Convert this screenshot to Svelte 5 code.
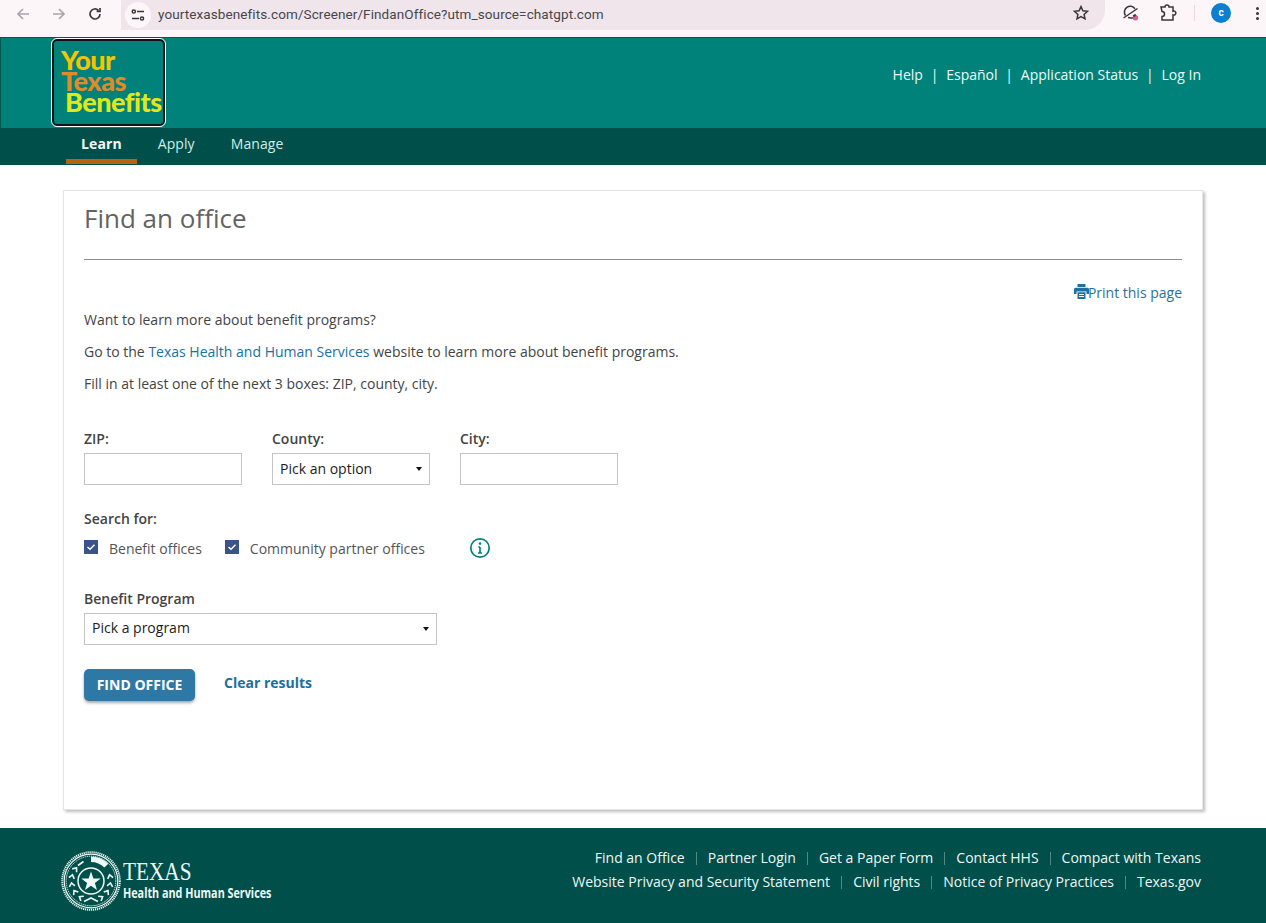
<script>
	const topLinks = ['Help', 'Español', 'Application Status', 'Log In'];
	const navItems = ['Learn', 'Apply', 'Manage'];
	const footerRows = [
		['Find an Office', 'Partner Login', 'Get a Paper Form', 'Contact HHS', 'Compact with Texans'],
		['Website Privacy and Security Statement', 'Civil rights', 'Notice of Privacy Practices', 'Texas.gov']
	];
	// laurel chevrons round the seal, degrees up from the bottom
	const leftLeaves = [32, 56, 80, 104, 128];
	const rightLeaves = [32, 56, 80, 104];
</script>

<div class="chrome">
	<div class="nav-btns">
		<svg width="16" height="16" viewBox="0 0 16 16" class="faded"><path d="M14 8H3M8 3L3 8l5 5" /></svg>
		<svg width="16" height="16" viewBox="0 0 16 16" class="faded"><path d="M2 8h11M8 3l5 5-5 5" /></svg>
		<svg width="16" height="16" viewBox="0 0 16 16"><path d="M13 8a5 5 0 1 1-1.600-3.700M13 2v3.400H9.600" /></svg>
	</div>
	<div class="omnibox">
		<span class="tune">
			<svg width="16" height="16" viewBox="0 0 16 16"><path d="M7 4.500h7M2 11.500h7" /><circle cx="3.800" cy="4.500" r="1.600" /><circle cx="12" cy="11.500" r="1.600" /></svg>
		</span>
		<span class="url">yourtexasbenefits.com/Screener/FindanOffice?utm_source=chatgpt.com</span>
		<svg class="star" width="18" height="18" viewBox="0 0 18 18"><path d="M9 2.600l1.900 4.200 4.600.5-3.400 3.100.9 4.500L9 12.600l-4 2.300.9-4.500-3.400-3.100 4.600-.5z" /></svg>
	</div>
	<div class="tools">
		<span class="labs">
			<svg width="18" height="18" viewBox="0 0 18 18"><path d="M3.500 11.500a5.800 5.800 0 0 1 9.500-6.800M1.500 14L15.500 4.500M6 13.500c2 .6 3.500.5 5 .2" /><circle cx="13.500" cy="13.800" r="2.700" class="dot" /><path d="M11.200 12.300l2.600-1.700" class="dot-top" /></svg>
		</span>
		<svg width="20" height="20" viewBox="0 0 20 20"><path d="M3 4h4a2 2 0 1 1 4 0h4v4.300a2 2 0 1 1 0 3.600V17H4v-3.500a2.500 2.500 0 0 0 0-5z" /></svg>
		<span class="sep"></span>
		<span class="avatar">c</span>
		<span class="menu"><i></i><i></i><i></i></span>
	</div>
</div>

<header class="site-head">
	<div class="brand">
		<a class="logo" href="#top">
			<span class="l1">Your</span>
			<span class="l2">Texas</span>
			<span class="l3">Benefits</span>
		</a>
	</div>
	<nav class="top-links">
		{#each topLinks as link, i}
			{#if i > 0}<span class="pipe">|</span>{/if}
			<a href="#top">{link}</a>
		{/each}
	</nav>
</header>

<nav class="main-nav">
	{#each navItems as item, i}
		<a href="#top" class:active={i === 0}>{item}</a>
	{/each}
</nav>

<main class="page">
	<section class="card">
		<h1>Find an office</h1>
		<hr />
		<div class="print-row">
			<a href="#top" class="print">
				<svg width="15" height="15" viewBox="0 0 15 15"><path d="M3.500 0h8v3h-8zM1.500 3.800h12A1.500 1.500 0 0 1 15 5.300V10h-2.500V7.500h-10V10H0V5.300a1.500 1.500 0 0 1 1.500-1.500z" /><path d="M3.500 8.300h8V15h-8zM5 10v1h5v-1zM5 12v1h5v-1z" fill-rule="evenodd" /></svg>Print this page
			</a>
		</div>
		<p>Want to learn more about benefit programs?</p>
		<p>Go to the <a href="#top">Texas Health and Human Services</a> website to learn more about benefit programs.</p>
		<p>Fill in at least one of the next 3 boxes: ZIP, county, city.</p>

		<div class="fields">
			<div class="field">
				<span class="label">ZIP:</span>
				<div class="box"></div>
			</div>
			<div class="field">
				<span class="label">County:</span>
				<div class="box select">Pick an option<i class="caret"></i></div>
			</div>
			<div class="field">
				<span class="label">City:</span>
				<div class="box"></div>
			</div>
		</div>

		<span class="label search-label">Search for:</span>
		<div class="checks">
			<span class="check">
				<span class="tick"><svg width="14" height="14" viewBox="0 0 14 14"><path d="M3.500 7l2.500 2.300 4.500-4.600" /></svg></span>
				Benefit offices
			</span>
			<span class="check second">
				<span class="tick"><svg width="14" height="14" viewBox="0 0 14 14"><path d="M3.500 7l2.500 2.300 4.500-4.600" /></svg></span>
				Community partner offices
			</span>
			<svg class="info" width="22" height="22" viewBox="0 0 22 22"><circle cx="11" cy="11" r="9.200" /><path d="M11 10v6M9 16h4M9.300 10H11" /><circle cx="11" cy="6.600" r="1.300" class="info-dot" /></svg>
		</div>

		<span class="label program-label">Benefit Program</span>
		<div class="box select program">Pick a program<i class="caret"></i></div>

		<div class="actions">
			<button type="button">FIND OFFICE</button>
			<a href="#top" class="clear">Clear results</a>
		</div>
	</section>
</main>

<footer class="site-foot">
	<div class="hhs">
		<svg width="60" height="60" viewBox="0 0 60 60" class="seal">
			<circle cx="30" cy="30" r="28.800" class="ring-a" />
			<circle cx="30" cy="30" r="26.800" class="ring-b" />
			<circle cx="30" cy="30" r="24.800" class="ring-a thin" />
			<circle cx="30" cy="30" r="13" class="ring-c" />
			<path d="M30 5.500A24.500 24.500 0 0 1 47.300 12.700L43.400 16.600A19 19 0 0 0 30 11z" />
			{#each leftLeaves as a}
				<path class="leaf" d="M2-2.800L-1.500 0L2 2.800" transform="rotate({a} 30 30) translate(30 49.500)" />
			{/each}
			{#each rightLeaves as a}
				<path class="leaf" d="M-2-2.800L1.500 0L-2 2.800" transform="rotate({-a} 30 30) translate(30 49.500)" />
			{/each}
			<path class="leaf" d="M17 14.500l5.500-4M23 50.500l7-3.500 7 3.500" />
			<path d="M30 20.500l2.400 6.900 7.300.1-5.800 4.400 2.100 7-6-4.200-6 4.200 2.100-7-5.800-4.400 7.300-.1z" />
		</svg>
		<div class="hhs-text">
			<span class="tx">TEXAS</span>
			<span class="hhs-name">Health and Human Services</span>
		</div>
	</div>
	<div class="foot-links">
		{#each footerRows as row}
			<div class="foot-row">
				{#each row as link, i}
					{#if i > 0}<span class="foot-pipe"></span>{/if}
					<a href="#top">{link}</a>
				{/each}
			</div>
		{/each}
	</div>
</footer>

<style>
	:global(body) {
		margin: 0;
		background: #fff;
		font-family: 'Open Sans', 'Liberation Sans', sans-serif;
		color: #444;
	}

	a {
		text-decoration: none;
		color: inherit;
	}

	/* browser bar */
	.chrome {
		height: 37px;
		background: #fdf6f8;
		display: flex;
		align-items: flex-start;
		overflow: hidden;
	}

	.nav-btns {
		display: flex;
		gap: 20px;
		padding: 6px 0 0 15px;
		width: 110px;
		box-sizing: border-box;
		flex: none;
	}

	.nav-btns svg {
		fill: none;
		stroke: #3f3a40;
		stroke-width: 1.700;
	}

	.nav-btns svg.faded {
		stroke: #a9a5a9;
	}

	.omnibox {
		width: 984px;
		height: 30px;
		margin-left: 11px;
		background: #f1e5ec;
		border-radius: 0 0 20px 0;
		display: flex;
		align-items: center;
		flex: none;
		position: relative;
	}

	.tune {
		width: 26px;
		height: 26px;
		margin-left: 4px;
		border-radius: 50%;
		background: #fdf6f8;
		display: flex;
		align-items: center;
		justify-content: center;
	}

	.tune svg {
		fill: none;
		stroke: #3b3539;
		stroke-width: 1.500;
	}

	.url {
		margin: -2px 0 0 7px;
		font-family: Roboto, 'Liberation Sans', sans-serif;
		font-size: 13.500px;
		color: #45474a;
		letter-spacing: 0.1px;
	}

	.star {
		position: absolute;
		right: 15px;
		top: 4px;
		fill: none;
		stroke: #3b3539;
		stroke-width: 1.500;
	}

	.tools {
		display: flex;
		align-items: center;
		height: 26px;
		padding-left: 17px;
	}

	.tools svg {
		fill: none;
		stroke: #3b3539;
		stroke-width: 1.500;
	}

	.labs {
		display: flex;
		margin-right: 18px;
	}

	.tools svg .dot {
		fill: #dc5f8a;
		stroke: none;
	}

	.tools svg .dot-top {
		stroke: #2b3f86;
		stroke-width: 2;
	}

	.sep {
		width: 1px;
		height: 16px;
		background: #f0d8e0;
		margin: 0 16px;
	}

	.avatar {
		width: 20px;
		height: 20px;
		border-radius: 50%;
		background: #0b80d0;
		color: #fff;
		font: 700 10px/20px Roboto, sans-serif;
		text-align: center;
	}

	.menu {
		display: flex;
		flex-direction: column;
		gap: 2px;
		margin-left: 25px;
	}

	.menu i {
		width: 3px;
		height: 3px;
		border-radius: 50%;
		background: #3b3539;
	}

	/* header */
	.site-head {
		height: 91px;
		box-sizing: border-box;
		background: #00827a;
		border-top: 1px solid #00594f;
		border-left: 1px solid #00594f;
		display: flex;
		justify-content: space-between;
		padding: 1px 65px 0 51px;
	}

	.logo {
		display: flex;
		flex-direction: column;
		box-sizing: border-box;
		width: 113px;
		height: 87px;
		padding: 8px 0 0 7px;
		background: #00827a;
		border: 2px solid #111;
		outline: 1px solid #fff;
		border-radius: 5px;
		font-family: Lato, 'Open Sans', sans-serif;
		font-weight: 900;
		font-size: 27px;
		line-height: 21px;
		letter-spacing: -0.5px;
		overflow: hidden;
		white-space: nowrap;
	}

	.l1 {
		color: #f5c400;
	}

	.l2 {
		color: #e08a2a;
	}

	.l3 {
		color: #dfe81c;
		padding-left: 4px;
	}

	.top-links {
		display: flex;
		align-items: center;
		gap: 7.800px;
		height: 70px;
		color: #eafaf6;
		font-size: 14px;
	}

	.pipe {
		font-size: 14px;
	}

	.main-nav {
		height: 37px;
		background: #004f4a;
		display: flex;
		padding-left: 66px;
		font-size: 14px;
		letter-spacing: 0.1px;
		color: #cfeee6;
	}

	.main-nav a {
		box-sizing: border-box;
		height: 36px;
		padding: 6px 14px 0;
		margin-right: 8px;
		line-height: 20px;
	}

	.main-nav a.active {
		color: #f2f7f5;
		font-weight: 700;
		border-bottom: 5px solid #b5650e;
		padding: 6px 15px 0;
		margin-right: 7px;
	}

	/* content */
	.page {
		padding: 25px 63px 18px 63px;
	}

	.card {
		box-sizing: border-box;
		height: 620px;
		padding: 10px 20px 0 20px;
		border: 1px solid #e4e4e4;
		box-shadow: 2px 2px 3px #bdbdbd;
		background: #fff;
	}

	h1 {
		margin: 0;
		font-size: 26px;
		line-height: 34px;
		font-weight: 400;
		color: #636360;
	}

	hr {
		margin: 24px 0 0;
		border: 0;
		border-top: 1px solid #8c8c8c;
	}

	.print-row {
		display: flex;
		justify-content: flex-end;
		margin-top: 23px;
		height: 20px;
	}

	.print {
		display: flex;
		align-items: flex-start;
		color: #2a7299;
		font-size: 14px;
		line-height: 20px;
	}

	.print svg {
		fill: #20709d;
		margin: 1px -1px 0 0;
	}

	p {
		margin: 0 0 12px;
		font-size: 14px;
		line-height: 20px;
		color: #444;
	}

	.print-row + p {
		margin-top: 7px;
	}

	p a {
		color: #20709d;
	}

	.fields {
		display: flex;
		gap: 30px;
		margin-top: 35px;
	}

	.field {
		display: flex;
		flex-direction: column;
	}

	.label {
		display: block;
		font-size: 14px;
		line-height: 20px;
		font-weight: 600;
		color: #444;
	}

	.box {
		box-sizing: border-box;
		width: 158px;
		height: 32px;
		margin-top: 4px;
		border: 1px solid #c4c4c4;
		background: #fff;
	}

	.select {
		position: relative;
		padding-left: 7px;
		font-size: 14px;
		line-height: 30px;
		color: #1c1c1c;
	}

	.caret {
		position: absolute;
		right: 7px;
		top: 13px;
		border: 3.500px solid transparent;
		border-top: 4px solid #111;
		border-bottom: 0;
	}

	.search-label {
		margin-top: 24px;
	}

	.checks {
		display: flex;
		align-items: center;
		height: 22px;
		margin-top: 8px;
		font-size: 14px;
		color: #555;
	}

	.check {
		display: flex;
		align-items: center;
		gap: 11px;
	}

	.second {
		margin-left: 23px;
	}

	.tick {
		display: flex;
		width: 14px;
		height: 14px;
		margin-top: -3px;
		background: #3a5389;
	}

	.tick svg {
		fill: none;
		stroke: #fff;
		stroke-width: 1.400;
	}

	.info {
		margin-left: 44px;
		fill: none;
		stroke: #00827a;
		stroke-width: 1.700;
	}

	.info-dot {
		fill: #00827a;
		stroke: none;
	}

	.program-label {
		margin-top: 30px;
	}

	.program {
		width: 353px;
		margin-top: 4px;
		line-height: 28px;
	}

	.actions {
		display: flex;
		align-items: flex-start;
		gap: 29px;
		margin-top: 24px;
	}

	button {
		width: 111px;
		height: 32px;
		padding: 0;
		border: 0;
		border-radius: 5px;
		background: #2e78a6;
		box-shadow: 0 2px 3px #a9a9a9;
		color: #fff;
		font: 700 14px/32px 'Open Sans', sans-serif;
	}

	.clear {
		color: #20709d;
		font-size: 14px;
		font-weight: 700;
		line-height: 28px;
	}

	/* footer */
	.site-foot {
		height: 95px;
		box-sizing: border-box;
		background: #004f4a;
		display: flex;
		justify-content: space-between;
		padding: 20px 65px 0 61px;
		color: #eef8f5;
	}

	.hhs {
		display: flex;
		align-items: flex-start;
		gap: 2px;
		margin-top: 3px;
	}

	.seal {
		fill: #eef8f5;
	}

	.ring-a {
		fill: none;
		stroke: #eef8f5;
		stroke-width: 2;
		stroke-dasharray: 1.200 0.800;
	}

	.ring-a.thin {
		stroke-width: 1;
	}

	.ring-b,
	.ring-c {
		fill: none;
		stroke: #eef8f5;
		stroke-width: 1.200;
	}

	.ring-c {
		stroke-width: 1.500;
	}

	.leaf {
		fill: none;
		stroke: #eef8f5;
		stroke-width: 1.600;
	}

	.hhs-text {
		display: flex;
		flex-direction: column;
		margin-top: 9px;
	}

	.tx {
		font-family: 'Liberation Serif', serif;
		font-size: 25px;
		line-height: 24px;
		transform: scaleX(0.85);
		transform-origin: left;
	}

	.hhs-name {
		font-family: 'Open Sans', sans-serif;
		font-size: 14px;
		font-weight: 700;
		line-height: 17px;
		transform: scaleX(0.77);
		transform-origin: left;
		white-space: nowrap;
	}

	.foot-links {
		display: flex;
		flex-direction: column;
		align-items: flex-end;
		gap: 4px;
		font-size: 14px;
		line-height: 20px;
	}

	.foot-row {
		display: flex;
		align-items: center;
		gap: 11px;
	}

	.foot-pipe {
		width: 1px;
		height: 13px;
		background: #4f8a83;
	}
</style>
